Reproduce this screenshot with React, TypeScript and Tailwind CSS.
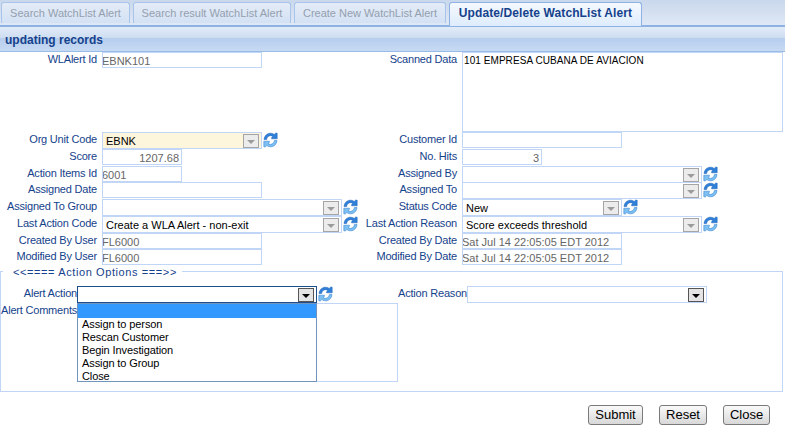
import React from "react";

const Refresh = () => (
  <svg width="15" height="16" viewBox="0 0 15 16" className="shrink-0">
    <path d="M1 7.500C1.400 3.500 4.200 1.200 7.500 1.200c1.500 0 2.700.4 3.700 1.200L12.800 1l1.400.2v5.600H8.600V5.600l1.400-1.200C9.300 3.900 8.500 3.700 7.500 3.700 5.400 3.700 3.900 5.200 3.600 7.500Z" fill="#2f80d8" stroke="#1c5fb4" strokeWidth="0.5" />
    <path d="M14 8.500c-.4 4-3.200 6.300-6.500 6.300-1.500 0-2.700-.4-3.700-1.200L2.200 15 .8 14.800V9.200h5.600v1.200L5 11.600c.7.500 1.500.7 2.500.7 2.100 0 3.600-1.500 3.900-3.800Z" fill="#7cc0f2" stroke="#2a78cf" strokeWidth="0.5" />
  </svg>
);

const Input = ({ w, value = "", right = false }: { w: string; value?: string; right?: boolean }) => (
  <div className={`${w} h-[16px] border border-[#c1d5f7] bg-white text-[#666666] leading-[16px] whitespace-nowrap overflow-hidden ${right ? "text-right pr-[2px]" : "-indent-[1px]"}`}>{value}</div>
);

const Arrow = ({ active = false }: { active?: boolean }) => (
  <div className={`w-[16px] h-[14px] shrink-0 border flex items-center justify-center ${active ? "border-[#555555] bg-[#e4e4e4]" : "border-[#a5a5a5] bg-[#ececec]"}`}>
    <div className={`w-0 h-0 border-x-[4px] border-x-transparent border-t-[4px] mt-[2px] ${active ? "border-t-black" : "border-t-[#9b9b9b]"}`} />
  </div>
);

const Select = ({ w, value = "", bg = "bg-white", active = false, border = "border-[#c1d5f7]" }: { w: string; value?: string; bg?: string; active?: boolean; border?: string }) => (
  <div className={`${w} h-[17px] border ${border} ${bg} flex items-center justify-between pl-[3px] pr-[2px] text-black`}>
    <span className="whitespace-nowrap pt-px">{value}</span>
    <Arrow active={active} />
  </div>
);

const Label = ({ w, children }: { w: string; children: React.ReactNode }) => (
  <div className={`${w} shrink-0 text-right text-[#15428b] pr-[5px] leading-[15px] whitespace-nowrap tracking-[-0.2px]`}>{children}</div>
);

const Cell = ({ label, children }: { label: string; children?: React.ReactNode }) => (
  <div className="flex items-start">
    <Label w="w-[102px]">{label}</Label>
    <div className="flex items-start gap-[1px]">{children}</div>
  </div>
);

const Row = ({ left, right, h = "h-[17px]" }: { left: React.ReactNode; right?: React.ReactNode; h?: string }) => (
  <div className={`grid grid-cols-[360px_1fr] ${h}`}>
    <div>{left}</div>
    <div>{right}</div>
  </div>
);

const Tab = ({ w, children, active = false }: { w: string; children: React.ReactNode; active?: boolean }) => (
  <div className={`${w} border border-b-0 rounded-t-[3px] flex items-center justify-center whitespace-nowrap ${active ? "h-[24px] pb-[3px] border-[#8db2e3] bg-gradient-to-b from-[#f5f9fe] to-[#deecfd] font-bold text-[12px] tracking-[0.1px] text-[#15428b] z-10" : "h-[21px] border-b border-[#a9c4ea] bg-gradient-to-b from-[#e4ecf7] to-[#d3e1f4] text-[11px] text-[#949fae]"}`}>
    {children}
  </div>
);

export default function App() {
  return (
    <div className="w-[785px] h-[430px] bg-white overflow-hidden text-[11px] font-['Liberation_Sans',Arial,sans-serif]">
      <div className="h-[27px] pt-[2px] pl-[1px] flex items-start gap-[3px] bg-gradient-to-b from-[#c9d8ec] to-[#dfe8f6] border-b-[2px] border-[#8db2e3]">
        <Tab w="w-[129px]">Search WatchList Alert</Tab>
        <Tab w="w-[158px]">Search result WatchList Alert</Tab>
        <Tab w="w-[152px]">Create New WatchList Alert</Tab>
        <Tab w="w-[193px]" active>Update/Delete WatchList Alert</Tab>
      </div>
      <div className="h-[25px] border-b border-[#99bbe8] bg-[linear-gradient(to_bottom,#e2ecf8_0%,#cddcf1_46%,#b6cdee_46%,#c7daf3_100%)] pl-[5px] pt-[6px] font-bold text-[#15428b] text-[12px] leading-[15px]">updating records</div>

      <div className="h-[80px] grid grid-cols-[360px_1fr]">
        <div><Cell label="WLAlert Id"><Input w="w-[160px]" value="EBNK101" /></Cell></div>
        <div>
          <Cell label="Scanned Data">
            <div className="w-[321px] h-[80px] border border-[#c1d5f7] bg-white text-black text-[10px] tracking-[0.07px] leading-[15px] pl-[1px]">101 EMPRESA CUBANA DE AVIACION</div>
          </Cell>
        </div>
      </div>

      <Row
        left={<Cell label="Org Unit Code"><Select w="w-[160px]" value="EBNK" bg="bg-[#fdf5dc]" /><Refresh /></Cell>}
        right={<Cell label="Customer Id"><Input w="w-[160px]" /></Cell>}
      />
      <Row
        left={<Cell label="Score"><Input w="w-[80px]" value="1207.68" right /></Cell>}
        right={<Cell label="No. Hits"><Input w="w-[80px]" value="3" right /></Cell>}
      />
      <Row
        h="h-[16px]"
        left={<Cell label="Action Items Id"><Input w="w-[80px]" value="6001" /></Cell>}
        right={<Cell label="Assigned By"><Select w="w-[240px]" /><Refresh /></Cell>}
      />
      <Row
        left={<Cell label="Assigned Date"><Input w="w-[160px]" /></Cell>}
        right={<Cell label="Assigned To"><Select w="w-[240px]" /><Refresh /></Cell>}
      />
      <Row
        left={<Cell label="Assigned To Group"><Select w="w-[240px]" /><Refresh /></Cell>}
        right={<Cell label="Status Code"><Select w="w-[160px]" value="New" /><Refresh /></Cell>}
      />
      <Row
        left={<Cell label="Last Action Code"><Select w="w-[240px]" value="Create a WLA Alert - non-exit" /><Refresh /></Cell>}
        right={<Cell label="Last Action Reason"><Select w="w-[240px]" value="Score exceeds threshold" /><Refresh /></Cell>}
      />
      <Row
        h="h-[16px]"
        left={<Cell label="Created By User"><Input w="w-[160px]" value="FL6000" /></Cell>}
        right={<Cell label="Created By Date"><Input w="w-[160px]" value="Sat Jul 14 22:05:05 EDT 2012" /></Cell>}
      />
      <Row
        left={<Cell label="Modified By User"><Input w="w-[160px]" value="FL6000" /></Cell>}
        right={<Cell label="Modified By Date"><Input w="w-[160px]" value="Sat Jul 14 22:05:05 EDT 2012" /></Cell>}
      />

      <div className="relative mt-[5px] w-[783px] h-[121px] border border-[#c1d5f7] pt-[14px]">
        <div className="absolute -top-[7px] left-[2px] w-[179px] pl-[10px] bg-white text-[#15428b] leading-[14px] tracking-[0.6px] whitespace-nowrap">{"<<==== Action Options ===>>"}</div>
        <div className="flex h-[17px]">
          <div className="w-[396px] flex">
            <div className="w-[76px] text-right text-[#15428b] leading-[15px] whitespace-nowrap tracking-[-0.2px]">Alert Action</div>
            <Select w="w-[240px]" active border="border-[#1f4e8c]" />
            <div className="ml-[1px]"><Refresh /></div>
          </div>
          <div className="w-[70px] text-right text-[#15428b] leading-[15px] whitespace-nowrap tracking-[-0.2px]">Action Reason</div>
          <Select w="w-[240px]" active />
        </div>
        <div className="flex relative">
          <div className="w-[76px] text-right text-[#15428b] leading-[15px] whitespace-nowrap tracking-[-0.2px]">Alert Comments</div>
          <div className="w-[321px] h-[79px] border border-[#c1d5f7] bg-white" />
          <div className="absolute left-[76px] top-0 w-[240px] h-[79px] border border-[#7094bd] bg-white text-black z-10 leading-[13px] tracking-[-0.1px]">
            <div className="h-[14px] bg-[#3399ff]" />
            <div className="pl-[4px]">Assign to person</div>
            <div className="pl-[4px]">Rescan Customer</div>
            <div className="pl-[4px]">Begin Investigation</div>
            <div className="pl-[4px]">Assign to Group</div>
            <div className="pl-[4px]">Close</div>
          </div>
        </div>
      </div>

      <div className="flex mt-[13px] pl-[588px] text-[13px] text-black">
        <button className="w-[55px] h-[20px] mr-[16px] rounded-[3px] border border-[#7a7a7a] bg-gradient-to-b from-[#fafafa] to-[#d8d8d8] leading-[18px]">Submit</button>
        <button className="w-[48px] h-[20px] mr-[16px] rounded-[3px] border border-[#7a7a7a] bg-gradient-to-b from-[#fafafa] to-[#d8d8d8] leading-[18px]">Reset</button>
        <button className="w-[47px] h-[20px] rounded-[3px] border border-[#7a7a7a] bg-gradient-to-b from-[#fafafa] to-[#d8d8d8] leading-[18px]">Close</button>
      </div>
    </div>
  );
}
